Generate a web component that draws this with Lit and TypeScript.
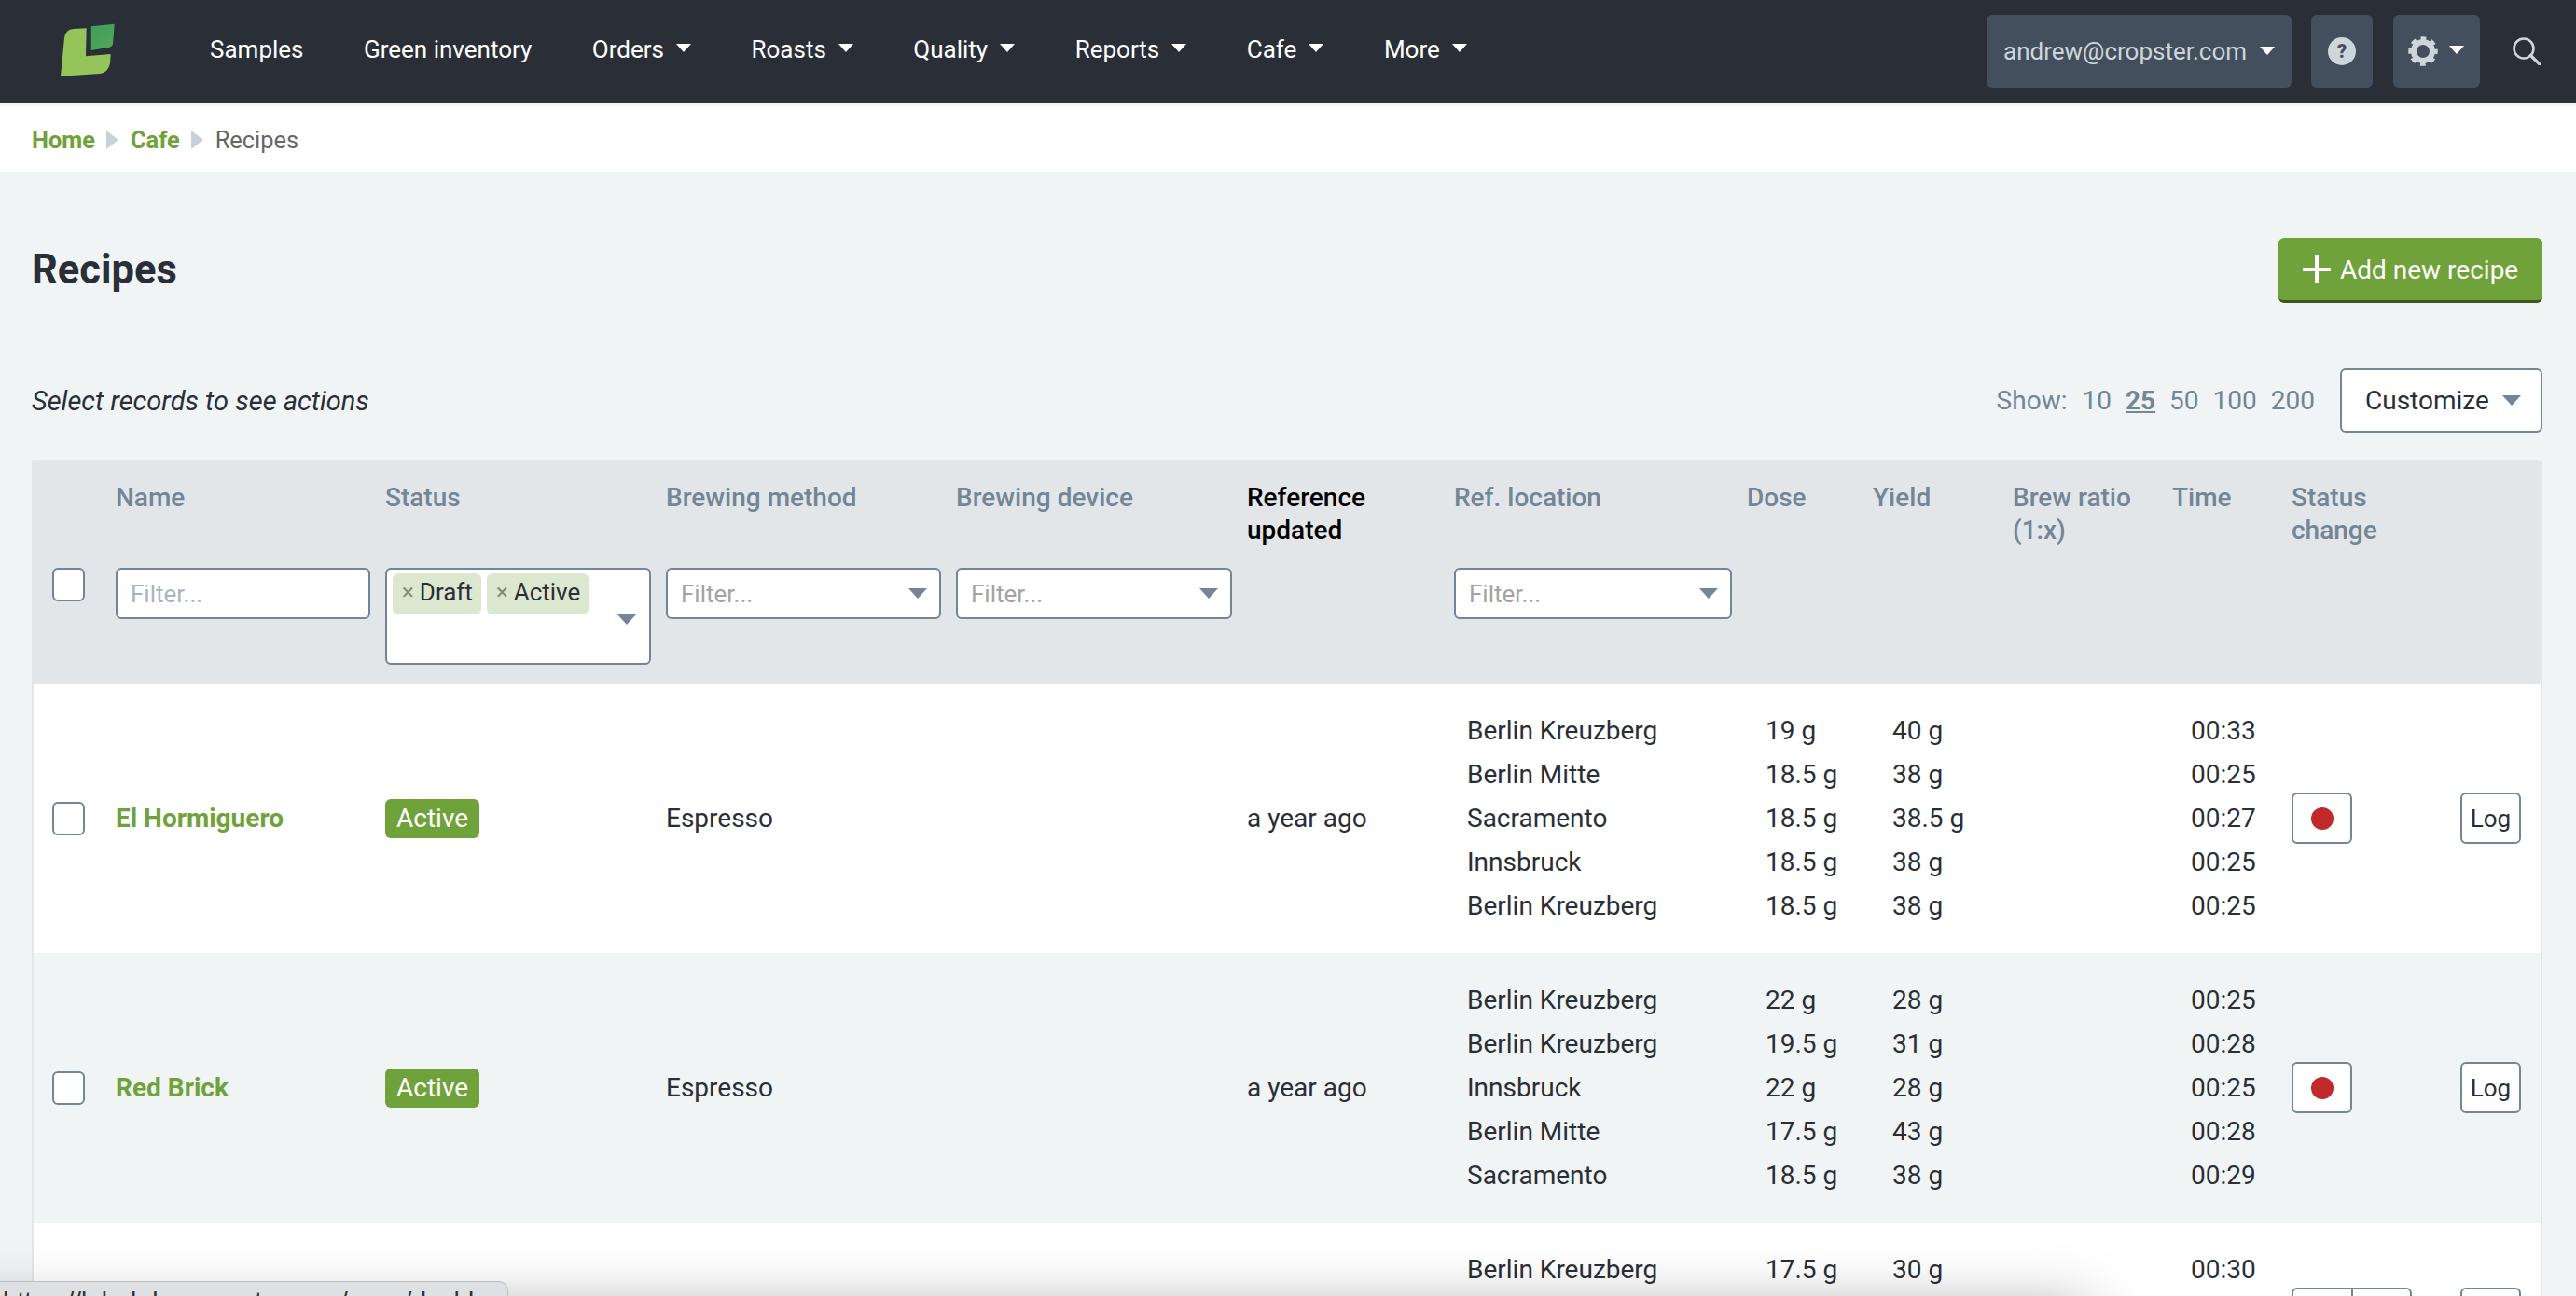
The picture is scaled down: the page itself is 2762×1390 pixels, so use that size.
import { LitElement, html, css } from "lit";
import { customElement } from "lit/decorators.js";

type Line = [string, string, string, string];

const ROW1: Line[] = [
  ["Berlin Kreuzberg", "19 g", "40 g", "00:33"],
  ["Berlin Mitte", "18.5 g", "38 g", "00:25"],
  ["Sacramento", "18.5 g", "38.5 g", "00:27"],
  ["Innsbruck", "18.5 g", "38 g", "00:25"],
  ["Berlin Kreuzberg", "18.5 g", "38 g", "00:25"],
];
const ROW2: Line[] = [
  ["Berlin Kreuzberg", "22 g", "28 g", "00:25"],
  ["Berlin Kreuzberg", "19.5 g", "31 g", "00:28"],
  ["Innsbruck", "22 g", "28 g", "00:25"],
  ["Berlin Mitte", "17.5 g", "43 g", "00:28"],
  ["Sacramento", "18.5 g", "38 g", "00:29"],
];
const ROW3: Line[] = [
  ["Berlin Kreuzberg", "17.5 g", "30 g", "00:30"],
  ["\u00a0", "\u00a0", "\u00a0", "\u00a0"],
  ["\u00a0", "\u00a0", "\u00a0", "\u00a0"],
];

@customElement("app-root")
export class AppRoot extends LitElement {
  static styles = css`
    :host {
      display: block;
      position: relative;
      width: 100%;
      height: 1390px;
      overflow: hidden;
      background: #f0f4f5;
      font-family: Roboto, "Liberation Sans", sans-serif;
      font-size: 28px;
      color: #2a2e37;
    }
    * { box-sizing: border-box; }

    .nav {
      height: 110px;
      background: #2a2e37;
      display: flex;
      align-items: center;
      padding-left: 64px;
      color: #fff;
      font-size: 26px;
    }
    .logo { width: 60px; height: 60px; margin-right: 101px; flex: none; }
    .menu { display: flex; align-items: center; gap: 64.5px; height: 100%; padding-bottom: 5px; }
    .menu span { display: inline-flex; align-items: center; white-space: nowrap; }
    .caret {
      display: inline-block;
      width: 0; height: 0;
      border-left: 8px solid transparent;
      border-right: 8px solid transparent;
      border-top: 9px solid #fff;
      margin-left: 13px;
      margin-top: -2px;
    }
    .tools { margin-left: auto; display: flex; align-items: center; padding-right: 38px; }
    .tool {
      height: 78px;
      background: #444f5e;
      border-radius: 6px;
      display: flex;
      align-items: center;
      color: #cdd6da;
    }
    .user { width: 327px; padding-left: 18px; margin-right: 21px; }
    .user .caret { margin-left: 14px; }
    .help { width: 66px; justify-content: center; margin-right: 22px; }
    .gear { width: 93px; padding-left: 16px; margin-right: 35px; }
    .gear .caret { margin-left: 12px; margin-top: -4px; }
    .search { width: 30px; height: 30px; flex: none; }

    .crumbs {
      margin-top: 4px;
      height: 71px;
      background: #fff;
      display: flex;
      align-items: center;
      padding-left: 34px;
      color: #666;
      font-size: 25.4px;
    }
    .crumbs b { color: #6fa23a; font-weight: 700; }
    .sep {
      width: 0; height: 0;
      border-top: 10px solid transparent;
      border-bottom: 10px solid transparent;
      border-left: 13px solid #c8d1d8;
      margin: 0 12.5px;
    }

    .content { padding: 0 36px 0 34px; }
    .head { display: flex; justify-content: space-between; align-items: flex-start; padding-top: 70px; height: 210px; }
    h1 { margin: 0; font-size: 43.5px; line-height: 70px; font-weight: 700; }
    .add {
      width: 283px;
      height: 70px;
      background: #6fa23a;
      border-bottom: 3px solid #3b5a1a;
      border-radius: 6px;
      color: #fff;
      display: flex;
      align-items: center;
      gap: 10px;
      padding: 2px 0 0 26px;
      font-size: 28px;
    }
    .add svg { width: 30px; height: 30px; flex: none; margin-top: -2px; }

    .tools-row { display: flex; align-items: center; justify-content: space-between; height: 69px; margin-bottom: 29px; }
    .tools-row i { font-size: 29px; }
    .pager { display: flex; align-items: center; color: #738596; gap: 15px; }
    .pager .cur { font-weight: 700; text-decoration: underline; }
    .pager .lbl { margin-right: 1px; }
    .custom {
      width: 217px;
      height: 69px;
      background: #fff;
      border: 2px solid #738596;
      border-radius: 6px;
      display: flex;
      align-items: center;
      padding-left: 25px;
      margin-left: 12px;
      color: #2a2e37;
    }
    .custom .caret, .sel .caret { border-top-color: #738596; }
    .custom .caret { margin-left: 14px; margin-top: 0; border-left-width: 10px; border-right-width: 10px; border-top-width: 11px; }

    .table { width: 2692px; border-left: 2px solid #e2e6e9; border-right: 2px solid #e2e6e9; }
    .grid {
      display: grid;
      grid-template-columns: 88px 289px 301px 311px 312px 222px 314px 135px 150px 171px 128px 267px;
    }
    .thead {
      grid-template-rows: 116px 125px;
      background: #e2e6e9;
      border-radius: 6px 6px 0 0;
      margin: 0 -2px;
      padding: 0 2px;
      color: #738596;
      font-weight: 500;
    }
    .th { padding-top: 23px; line-height: 35px; padding-right: 20px; }
    .th.on { color: #000; }
    .f { padding-right: 16px; }
    .check {
      appearance: none;
      display: block;
      width: 35px;
      height: 36px;
      margin: 0 0 0 20px;
      background: #fff;
      border: 2px solid #738596;
      border-radius: 6px;
    }
    .inp, .sel {
      width: 100%;
      height: 55px;
      background: #fff;
      border: 2px solid #738596;
      border-radius: 6px;
      font: 400 26px Roboto, sans-serif;
      padding: 0 14px;
      color: #a3a3a3;
      display: flex;
      align-items: center;
      justify-content: space-between;
      outline: none;
    }
    .inp::placeholder { color: #a9b4be; opacity: 1; }
    .sel .caret { margin: 0 -1px 0 0; border-left-width: 10px; border-right-width: 10px; border-top-width: 11px; }
    .multi {
      position: relative;
      height: 104px;
      background: #fff;
      border: 2px solid #738596;
      border-radius: 6px;
      padding: 4px 6px;
      display: flex;
      align-items: flex-start;
      gap: 6px;
    }
    .tag {
      height: 44px;
      background: #dce7d0;
      border-radius: 6px;
      padding: 0 9px 4px 10px;
      display: flex;
      align-items: center;
      font-weight: 400;
      font-size: 26px;
      color: #2a2e37;
    }
    .tag em { font-style: normal; color: #7d8a78; font-size: 24px; margin-right: 6px; }
    .multi .caret { position: absolute; right: 14px; top: 48px; border-left-width: 10px; border-right-width: 10px; border-top-width: 11px; border-top-color: #738596; margin: 0; }

    .row { align-items: center; padding: 26px 0 27px; background: #fff; }
    .row.alt { padding: 27px 0 28px; background: #f0f4f5; }
    .name { color: #6fa23a; font-weight: 700; }
    .badge {
      display: inline-flex;
      align-items: center;
      height: 42px;
      padding: 0 12px;
      background: #6fa23a;
      color: #fff;
      border-radius: 6px;
    }
    .list div { line-height: 47px; white-space: nowrap; }
    .loc { padding-left: 14px; }
    .dose { padding-left: 20px; }
    .yield { padding-left: 21px; }
    .time { padding-left: 20px; }
    .acts { display: flex; justify-content: space-between; padding-right: 21px; font-size: 26px; }
    .btn {
      width: 65px;
      height: 55px;
      background: #fff;
      border: 2px solid #738596;
      border-radius: 6px;
      display: flex;
      align-items: center;
      justify-content: center;
    }
    .dot { width: 24px; height: 24px; border-radius: 50%; background: #c02a2a; }
    .pair { display: flex; width: 129px; height: 55px; background: #fff; border: 2px solid #738596; border-radius: 6px; }
    .pair div { flex: 1; }
    .pair div + div { border-left: 2px solid #738596; }

    .shade {
      position: absolute;
      left: -100px;
      top: 1402px;
      width: 2340px;
      height: 60px;
      box-shadow: 0 0 64px rgba(0, 0, 0, 0.34);
      pointer-events: none;
    }
    .status {
      position: absolute;
      left: 0;
      top: 1374px;
      width: 545px;
      height: 40px;
      background: #dfe0e3;
      border-top: 1px solid #bdbec2;
      border-right: 1px solid #bdbec2;
      border-radius: 0 10px 0 0;
      padding-left: 3px;
      font: 28px/42px "Liberation Sans", sans-serif;
      color: #333;
      white-space: nowrap;
      overflow: hidden;
    }
  `;

  private rowTpl(name: string, lines: Line[], alt: boolean, pair = false) {
    return html`
      <div class="grid row ${alt ? "alt" : ""}">
        <div><input class="check" type="checkbox" /></div>
        <div class="name">${name}</div>
        <div>${name ? html`<span class="badge">Active</span>` : ""}</div>
        <div>${name ? "Espresso" : ""}</div>
        <div></div>
        <div>${name ? "a year ago" : ""}</div>
        <div class="list loc">${lines.map((l) => html`<div>${l[0]}</div>`)}</div>
        <div class="list dose">${lines.map((l) => html`<div>${l[1]}</div>`)}</div>
        <div class="list yield">${lines.map((l) => html`<div>${l[2]}</div>`)}</div>
        <div></div>
        <div class="list time">${lines.map((l) => html`<div>${l[3]}</div>`)}</div>
        <div class="acts">
          ${pair
            ? html`<div class="pair"><div></div><div></div></div>`
            : html`<div class="btn"><span class="dot"></span></div>`}
          <div class="btn">${pair ? "" : "Log"}</div>
        </div>
      </div>
    `;
  }

  render() {
    return html`
      <div class="nav">
        <svg class="logo" viewBox="0 0 60 60">
          <defs>
            <linearGradient id="lg" x1="0" y1="0" x2="1" y2="1">
              <stop offset="0" stop-color="#3f9c5a" />
              <stop offset="1" stop-color="#52a85a" />
            </linearGradient>
          </defs>
          <path fill="#94c45a" d="M1 56.7 L5 16 Q6 6.5 15 6 L28.7 5.3 L28 35.3 L54.7 33 L54 43 Q52 53 43 54 Z" />
          <path fill="url(#lg)" d="M33.7 3.3 L58.7 .7 L57 22 Q56.5 25.5 52 26 L33.7 29 Z" />
        </svg>
        <div class="menu">
          <span>Samples</span>
          <span>Green inventory</span>
          <span>Orders<i class="caret"></i></span>
          <span>Roasts<i class="caret"></i></span>
          <span>Quality<i class="caret"></i></span>
          <span>Reports<i class="caret"></i></span>
          <span>Cafe<i class="caret"></i></span>
          <span>More<i class="caret"></i></span>
        </div>
        <div class="tools">
          <div class="tool user">andrew@cropster.com<i class="caret"></i></div>
          <div class="tool help">
            <svg width="30" height="30" viewBox="0 0 30 30">
              <circle cx="15" cy="15" r="15" fill="#cdd6da" />
              <text x="15" y="22" text-anchor="middle" font-family="Roboto, sans-serif" font-weight="900" font-size="20" fill="#444f5e">?</text>
            </svg>
          </div>
          <div class="tool gear">
            <svg width="32" height="32" viewBox="0 0 32 32">
              <circle cx="16" cy="16" r="10" fill="none" stroke="#cdd6da" stroke-width="6" />
              <circle cx="16" cy="16" r="13.5" fill="none" stroke="#cdd6da" stroke-width="4.5" stroke-dasharray="5.6 5" stroke-dashoffset="2.8" />
            </svg>
            <i class="caret"></i>
          </div>
          <svg class="search" viewBox="0 0 30 30">
            <circle cx="12" cy="12" r="10.5" fill="none" stroke="#cdd6da" stroke-width="2.6" />
            <path d="M19.5 19.5 L29 29" stroke="#cdd6da" stroke-width="3.2" stroke-linecap="round" />
          </svg>
        </div>
      </div>

      <div class="crumbs">
        <b>Home</b><i class="sep"></i><b>Cafe</b><i class="sep"></i><span>Recipes</span>
      </div>

      <div class="content">
        <div class="head">
          <h1>Recipes</h1>
          <div class="add">
            <svg viewBox="0 0 30 30"><path d="M13 0h4v13h13v4H17v13h-4V17H0v-4h13z" fill="#fff" /></svg>
            Add new recipe
          </div>
        </div>
        <div class="tools-row">
          <i>Select records to see actions</i>
          <div class="pager">
            <span class="lbl">Show:</span><span>10</span><span class="cur">25</span><span>50</span><span>100</span><span>200</span>
            <div class="custom">Customize<i class="caret"></i></div>
          </div>
        </div>

        <div class="table">
          <div class="grid thead">
            <div></div>
            <div class="th">Name</div>
            <div class="th">Status</div>
            <div class="th">Brewing method</div>
            <div class="th">Brewing device</div>
            <div class="th on">Reference updated</div>
            <div class="th">Ref. location</div>
            <div class="th">Dose</div>
            <div class="th">Yield</div>
            <div class="th">Brew ratio (1:x)</div>
            <div class="th">Time</div>
            <div class="th">Status<br />change</div>

            <div><input class="check" type="checkbox" /></div>
            <div class="f"><input class="inp" placeholder="Filter..." /></div>
            <div class="f">
              <div class="multi">
                <span class="tag"><em>×</em>Draft</span>
                <span class="tag"><em>×</em>Active</span>
                <i class="caret"></i>
              </div>
            </div>
            <div class="f"><div class="sel">Filter...<i class="caret"></i></div></div>
            <div class="f"><div class="sel">Filter...<i class="caret"></i></div></div>
            <div></div>
            <div class="f"><div class="sel">Filter...<i class="caret"></i></div></div>
          </div>
          ${this.rowTpl("El Hormiguero", ROW1, false)}
          ${this.rowTpl("Red Brick", ROW2, true)}
          ${this.rowTpl("", ROW3, false, true)}
        </div>
      </div>

      <div class="shade"></div>
      <div class="status">https://label.dev.cropster.com/apps/dashboard</div>
    `;
  }
}
